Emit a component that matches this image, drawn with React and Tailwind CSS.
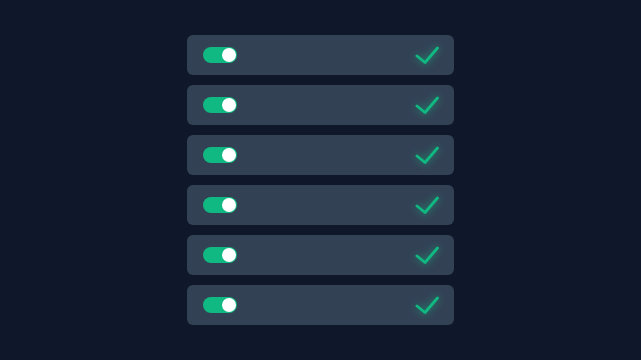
export default function App() {
  const rows = [0, 1, 2, 3, 4, 5];
  return (
    <div className="w-full h-screen bg-[#0f172a] flex items-center justify-center" style={{ fontFamily: "Inter, sans-serif" }}>
      <div className="flex flex-col gap-[10px] w-[267px]">
        {rows.map((i) => (
          <div key={i} className="h-10 rounded-md bg-[#334155] flex items-center justify-between pl-4 pr-[15px]">
            <div className="w-[34px] h-4 rounded-full bg-[#10b981] flex items-center justify-end pr-px">
              <div className="w-[14px] h-[14px] rounded-full bg-white" />
            </div>
            <svg width="24" height="18" viewBox="0 0 24 18" className="drop-shadow-[0_0_4px_rgba(16,185,129,0.8)]">
              <path d="M2 10 L10 16.5 L22.5 2" fill="none" stroke="#10b981" strokeWidth="2.8" strokeLinecap="round" strokeLinejoin="round" />
            </svg>
          </div>
        ))}
      </div>
    </div>
  );
}
